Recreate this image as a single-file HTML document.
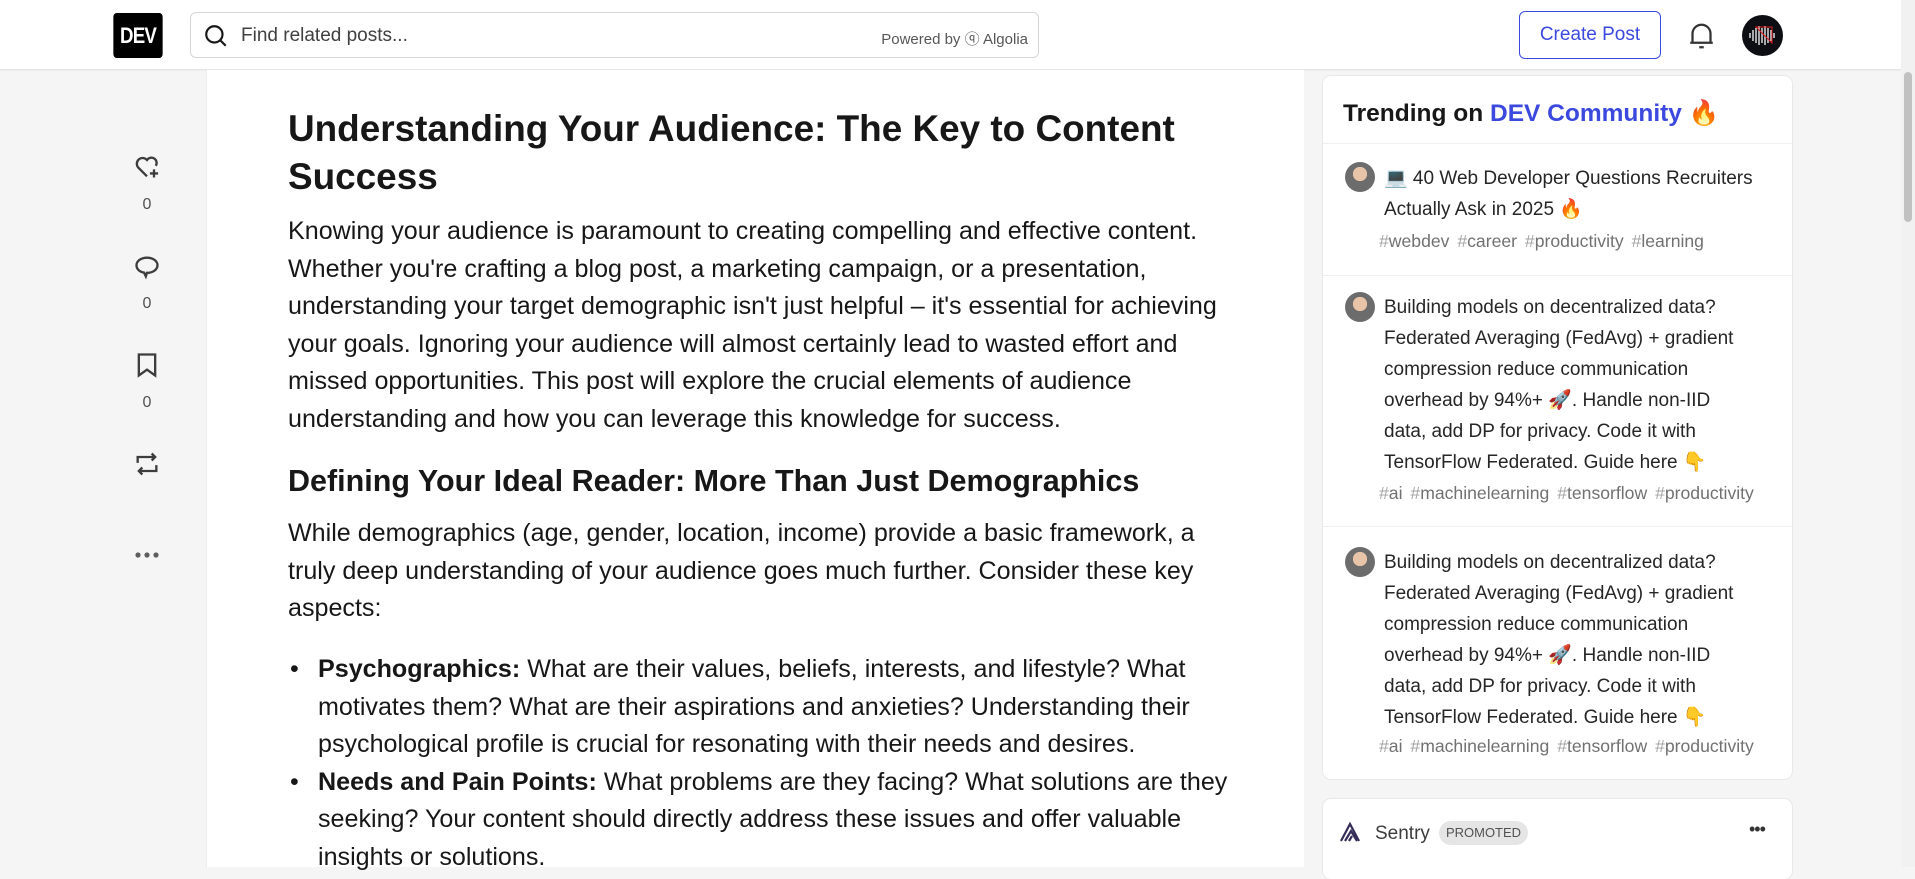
<!DOCTYPE html>
<html><head><meta charset="utf-8">
<style>
*{box-sizing:border-box;margin:0;padding:0}
body{width:1915px;height:867px;overflow:hidden;background:#f5f5f5;font-family:"Liberation Sans","Noto Sans CJK JP",sans-serif;color:#171717;position:relative}
.hdr{position:absolute;left:0;top:0;width:1901px;height:70px;background:#fff;border-bottom:1px solid #e5e5e5;box-shadow:0 1px 1px rgba(0,0,0,.04)}
.logo{position:absolute;left:109px;top:13px;width:58px;height:45px;background:#000;border-radius:4px;color:#fff;font-weight:bold;font-size:22px;line-height:45px;text-align:center;letter-spacing:-1px;transform:scaleX(.85)}
.search{position:absolute;left:190px;top:12px;width:849px;height:46px;border:1px solid #d6d6d7;border-radius:6px;background:#fff}
.search .ph{position:absolute;left:50px;top:12px;font-size:19px;color:#404040}
.search .pw{position:absolute;right:10px;top:15px;font-size:15px;color:#575757}
.cp{position:absolute;left:1519px;top:11px;width:142px;height:48px;border:1px solid #3b49df;border-radius:6px;color:#3b49df;font-size:19px;font-weight:500;text-align:center;line-height:46px}
.av{position:absolute;left:1742px;top:15px;width:41px;height:41px;border-radius:50%;background:#0d0d14;overflow:hidden}
.sb{position:absolute;left:1901px;top:0;width:14px;height:867px;background:#f1f1f1}
.sb i{position:absolute;left:3px;top:72px;width:8px;height:150px;background:#c1c1c1;border-radius:4px}
.art{position:absolute;left:206px;top:70px;width:1098px;height:797px;background:#fff;border-left:1px solid #ececec}
.ic{position:absolute;left:133px}
.cnt{position:absolute;width:30px;left:132px;text-align:center;font-size:16px;color:#525252}
.t{position:absolute;left:288px;white-space:nowrap}
h1.t{font-size:36.9px;font-weight:bold;line-height:48px}
.p{font-size:25.1px;line-height:37.6px;color:#171717}
h2.t{font-size:30.5px;font-weight:bold}
.card{position:absolute;left:1323px;width:469px;background:#fff;border-radius:8px;box-shadow:0 0 0 1px rgba(0,0,0,.05)}
.ch{font-size:24.5px;font-weight:bold;position:absolute;left:20px;top:22px;white-space:nowrap}
.div{position:absolute;left:0;width:469px;height:1px;background:#efefef}
.it{position:absolute;left:61px;font-size:19px;line-height:31px;color:#262626;white-space:nowrap}
.tags{position:absolute;left:56px;font-size:17.6px;color:#717171;white-space:nowrap;word-spacing:3px}
.tags b{font-weight:normal;color:#a3a3a3}
.ua{position:absolute;left:22px;width:30px;height:30px;border-radius:50%;background:radial-gradient(circle at 50% 40%,#e8c4a8 0 30%,#6c6c6c 31%)}
</style></head><body>
<div class="hdr">
 <div class="logo">DEV</div>
 <div class="search">
  <svg style="position:absolute;left:12px;top:10px" width="26" height="26" viewBox="0 0 24 24" fill="none" stroke="#171717" stroke-width="2"><circle cx="10.5" cy="10.5" r="7.5"/><path d="M16 16l5 5"/></svg>
  <span class="ph">Find related posts...</span>
  <span class="pw">Powered by <span style="font-size:15px">ⓠ</span> Algolia</span>
 </div>
 <div class="cp">Create Post</div>
 <svg style="position:absolute;left:1688px;top:21px" width="27" height="30" viewBox="0 0 24 26" fill="none" stroke="#333" stroke-width="2"><path d="M4 19V11a8 8 0 0116 0v8M2 19h20"/><path d="M10 23h4"/></svg>
 <div class="av"><svg width="41" height="41" viewBox="0 0 41 41"><g stroke="#ddd" stroke-width="1.5"><path d="M8 18v5M11 15v11M14 13v15M17 11v19M20 13v15M23 11v19M26 13v15M29 15v11M32 18v5"/></g><path d="M14 12L30 28V12z" fill="none" stroke="#d22" stroke-width="1"/></svg></div>
</div>
<div class="sb"><i></i></div>

<svg class="ic" style="top:153px" width="28" height="28" viewBox="0 0 24 24" fill="none" stroke="#3d3d3d" stroke-width="2"><path d="M12 20l-7.5-7.5A4.5 4.5 0 0112 6a4.5 4.5 0 017.5 5"/><path d="M18 14v7M14.5 17.5h7"/></svg>
<div class="cnt" style="top:196px">0</div>
<svg class="ic" style="top:253px" width="28" height="28" viewBox="0 0 24 24" fill="none" stroke="#3d3d3d" stroke-width="2"><path d="M12 4c5 0 9 2.8 9 6.5S17 17 12 17l-1 3-1.5-3.2C5.5 16.2 3 13.7 3 10.5 3 6.8 7 4 12 4z"/></svg>
<div class="cnt" style="top:295px">0</div>
<svg class="ic" style="top:351px" width="28" height="28" viewBox="0 0 24 24" fill="none" stroke="#3d3d3d" stroke-width="2"><path d="M5 3h14v18l-7-5-7 5z"/></svg>
<div class="cnt" style="top:394px">0</div>
<svg class="ic" style="top:450px" width="28" height="28" viewBox="0 0 24 24" fill="none" stroke="#3d3d3d" stroke-width="2"><path d="M4 11V6h15M16 3l3 3-3 3M20 13v5H5M8 15l-3 3 3 3"/></svg>
<svg style="position:absolute;left:134px;top:550px" width="26" height="10"><circle cx="4" cy="5" r="2.6" fill="#5e5e5e"/><circle cx="13" cy="5" r="2.6" fill="#5e5e5e"/><circle cx="22" cy="5" r="2.6" fill="#5e5e5e"/></svg>

<div class="art"></div>
<h1 class="t" style="top:105px">Understanding Your Audience: The Key to Content</h1>
<h1 class="t" style="top:153px">Success</h1>
<div class="t p" style="top:213px">Knowing your audience is paramount to creating compelling and effective content.<br>Whether you're crafting a blog post, a marketing campaign, or a presentation,<br>understanding your target demographic isn't just helpful – it's essential for achieving<br>your goals. Ignoring your audience will almost certainly lead to wasted effort and<br>missed opportunities. This post will explore the crucial elements of audience<br>understanding and how you can leverage this knowledge for success.</div>
<h2 class="t" style="top:464px">Defining Your Ideal Reader: More Than Just Demographics</h2>
<div class="t p" style="top:515px">While demographics (age, gender, location, income) provide a basic framework, a<br>truly deep understanding of your audience goes much further. Consider these key<br>aspects:</div>
<div class="t p" style="top:651px;left:290px">•<br><br><br>•</div>
<div class="t p" style="top:651px;left:318px"><b>Psychographics:</b> What are their values, beliefs, interests, and lifestyle? What<br>motivates them? What are their aspirations and anxieties? Understanding their<br>psychological profile is crucial for resonating with their needs and desires.<br><b>Needs and Pain Points:</b> What problems are they facing? What solutions are they<br>seeking? Your content should directly address these issues and offer valuable<br>insights or solutions.</div>

<div class="card" style="top:76px;height:703px">
 <div class="ch">Trending on <span style="color:#3b49df">DEV Community</span> 🔥</div>
 <div class="div" style="top:67px"></div>
 <div class="ua" style="top:86px"></div>
 <div class="it" style="top:87px">💻 40 Web Developer Questions Recruiters<br>Actually Ask in 2025 🔥</div>
 <div class="tags" style="top:155px"><b>#</b>webdev <b>#</b>career <b>#</b>productivity <b>#</b>learning</div>
 <div class="div" style="top:199px"></div>
 <div class="ua" style="top:216px"></div>
 <div class="it" style="top:216px">Building models on decentralized data?<br>Federated Averaging (FedAvg) + gradient<br>compression reduce communication<br>overhead by 94%+ 🚀. Handle non-IID<br>data, add DP for privacy. Code it with<br>TensorFlow Federated. Guide here 👇</div>
 <div class="tags" style="top:407px"><b>#</b>ai <b>#</b>machinelearning <b>#</b>tensorflow <b>#</b>productivity</div>
 <div class="div" style="top:450px"></div>
 <div class="ua" style="top:471px"></div>
 <div class="it" style="top:471px">Building models on decentralized data?<br>Federated Averaging (FedAvg) + gradient<br>compression reduce communication<br>overhead by 94%+ 🚀. Handle non-IID<br>data, add DP for privacy. Code it with<br>TensorFlow Federated. Guide here 👇</div>
 <div class="tags" style="top:660px"><b>#</b>ai <b>#</b>machinelearning <b>#</b>tensorflow <b>#</b>productivity</div>
</div>
<div class="card" style="top:799px;height:80px">
 <svg style="position:absolute;left:16px;top:22px" width="22" height="22" viewBox="0 0 22 22" fill="none" stroke="#362d59" stroke-width="2.2"><path d="M2 20L11 3l9 17M6 20l6-10 6 10M10 20l3-5"/></svg>
 <div style="position:absolute;left:52px;top:24px;font-size:19px;color:#3d3d3d">Sentry</div>
 <div style="position:absolute;left:116px;top:22px;width:89px;height:24px;border-radius:12px;background:#e5e5e5;color:#525252;font-size:13px;line-height:24px;text-align:center">PROMOTED</div>
 <div style="position:absolute;left:426px;top:20px;font-size:18px;color:#333;letter-spacing:-1px">•••</div>
</div>
</body></html>
